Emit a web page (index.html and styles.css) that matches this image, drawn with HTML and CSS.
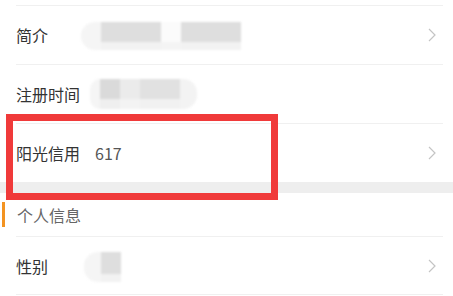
FILE: index.html
```html
<!DOCTYPE html>
<html lang="zh">
<head>
<meta charset="utf-8">
<link rel="stylesheet" href="styles.css">
</head>
<body>
<div class="page">
  <div class="top-gap"></div>
  <div class="row">
    <span class="label">简介</span>
    <span class="mosaic m-intro">
      <span class="cell c-halo-l w20"></span><span class="cell c-dark w60"></span><span class="cell c-pale w20"></span><span class="cell c-dark w60"></span>
    </span>
    <svg class="chev" viewBox="0 0 8 14" width="8" height="14"><path d="M1 1 L7 7 L1 13" fill="none" stroke="#c4c4c4" stroke-width="1.2"/></svg>
  </div>
  <div class="row">
    <span class="label">注册时间</span>
    <span class="mosaic m-reg">
      <span class="cell c-halo-l w10"></span><span class="cell c-darker w20"></span><span class="cell c-light w20"></span><span class="cell c-mid w40"></span><span class="cell c-halo-r w17"></span>
    </span>
  </div>
  <div class="row">
    <span class="label">阳光信用</span>
    <span class="value">617</span>
    <svg class="chev" viewBox="0 0 8 14" width="8" height="14"><path d="M1 1 L7 7 L1 13" fill="none" stroke="#c4c4c4" stroke-width="1.2"/></svg>
  </div>
  <div class="band"></div>
  <div class="section">
    <span class="mark"></span>
    <span class="section-title">个人信息</span>
  </div>
  <div class="row last">
    <span class="label">性别</span>
    <span class="mosaic m-sex">
      <span class="cell c-halo-l w17"></span><span class="cell c-dark w20"></span>
    </span>
    <svg class="chev" viewBox="0 0 8 14" width="8" height="14"><path d="M1 1 L7 7 L1 13" fill="none" stroke="#c4c4c4" stroke-width="1.2"/></svg>
  </div>
  <div class="highlight"></div>
</div>
</body>
</html>
```

FILE: styles.css
```css
html, body {
  margin: 0;
  padding: 0;
  background: #ffffff;
}
.page {
  position: relative;
  width: 453px;
  height: 296px;
  overflow: hidden;
  font-family: "Noto Sans CJK SC", "Noto Sans", sans-serif;
  color: #333333;
}
.top-gap {
  height: 5px;
}
.row {
  box-sizing: border-box;
  height: 59px;
  margin: 0 10px 0 16px;
  border-top: 1px solid #f0f0f0;
  display: flex;
  align-items: center;
}
.row.last {
  border-bottom: 1px solid #f0f0f0;
}
.label {
  font-size: 16px;
  line-height: 20px;
  color: #333333;
}
.value {
  margin-left: 15px;
  font-size: 16px;
  color: #555555;
}
.chev {
  margin-left: auto;
  margin-right: 7px;
  display: block;
}
.mosaic {
  display: flex;
  align-items: stretch;
  filter: blur(1.2px);
}
.cell {
  display: block;
}
.w10 { width: 10px; }
.w17 { width: 17px; }
.w20 { width: 20px; }
.w40 { width: 40px; }
.w60 { width: 60px; }
.c-halo-l {
  background: #f5f5f5;
  border-radius: 14px 0 0 14px;
}
.c-halo-r {
  background: #f3f3f3;
  border-radius: 0 14px 14px 0;
}
.c-pale {
  background: linear-gradient(#fbfbfb 70%, #f4f4f4 70%);
}
.c-dark {
  background: linear-gradient(#dedede 72%, #f2f2f2 72%);
}
.c-darker {
  background: linear-gradient(#dadada 66%, #efefef 66%);
}
.c-light {
  background: linear-gradient(#ebebeb 66%, #f3f3f3 66%);
}
.c-mid {
  background: linear-gradient(#e1e1e1 66%, #f1f1f1 66%);
}
.m-intro {
  margin-left: 33px;
  height: 28px;
  margin-top: 1px;
}
.m-reg {
  margin-left: 10px;
  height: 30px;
}
.m-sex {
  margin-left: 36px;
  height: 30px;
  margin-top: 2px;
}
.band {
  height: 11px;
  background: #eeeeee;
}
.section {
  height: 43px;
  display: flex;
  align-items: center;
}
.mark {
  display: block;
  width: 3px;
  height: 25px;
  margin-left: 2px;
  background: #f39321;
}
.section-title {
  margin-left: 12px;
  font-size: 16px;
  color: #666666;
}
.highlight {
  position: absolute;
  left: 6px;
  top: 114px;
  width: 272px;
  height: 86px;
  box-sizing: border-box;
  border: 7px solid #f03a3a;
}
```
